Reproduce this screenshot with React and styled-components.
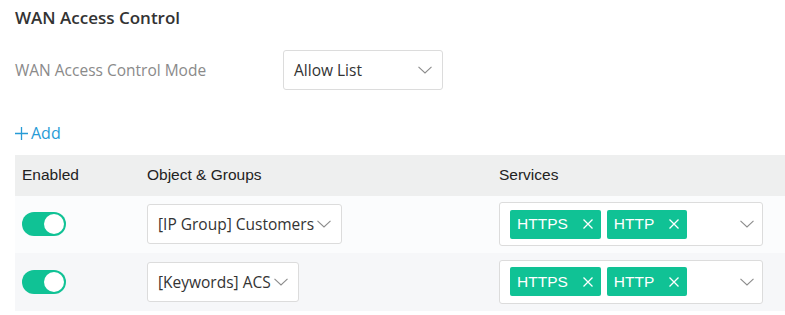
import React from "react";
import styled, { createGlobalStyle } from "styled-components";

const Global = createGlobalStyle`
  html, body { margin: 0; padding: 0; background: #fff; }
  body { font-family: "Open Sans", "Liberation Sans", sans-serif; }
`;

const Page = styled.div`
  padding: 6px 0 0 15px;
  width: 770px;
`;

const Title = styled.h2`
  margin: 0;
  font-size: 17px;
  line-height: 24px;
  font-weight: 600;
  color: #333;
`;

const ModeRow = styled.div`
  display: flex;
  align-items: center;
  margin-top: 20px;
`;

const Label = styled.div`
  width: 268px;
  font-size: 15.5px;
  color: #8a8a8a;
`;

const Select = styled.div`
  box-sizing: border-box;
  display: inline-flex;
  align-items: center;
  justify-content: space-between;
  gap: 3px;
  width: ${(p) => (p.$width ? `${p.$width}px` : "auto")};
  height: ${(p) => p.$height || 40}px;
  padding: 0 ${(p) => p.$pr ?? 10}px 0 10px;
  border: 1px solid #dcdcdc;
  border-radius: 3px;
  background: #fff;
  font-family: "Open Sans", sans-serif;
  font-size: 15.5px;
  color: #333;
  white-space: nowrap;
`;

const AddLink = styled.div`
  display: inline-flex;
  align-items: center;
  gap: 3px;
  margin-top: 32px;
  font-size: 16px;
  line-height: 22px;
  color: #279bd6;
`;

const Table = styled.div`
  margin-top: 10px;
  font-family: "Liberation Sans", Arial, sans-serif;
`;

const Row = styled.div`
  display: grid;
  grid-template-columns: 125px 352px 1fr;
  align-items: center;
  height: ${(p) => p.$h}px;
  background: ${(p) => p.$bg};
`;

const HeadCell = styled.div`
  padding-left: 7px;
  font-size: 15.5px;
  color: #222;
`;

const Cell = styled.div`
  padding-left: 7px;
  display: flex;
  align-items: center;
`;

const Toggle = styled.div`
  box-sizing: border-box;
  width: 44px;
  height: 24px;
  border-radius: 12px;
  background: #10c295;
  padding: 2px;
  display: flex;
  justify-content: flex-end;
  &::after {
    content: "";
    width: 20px;
    height: 20px;
    border-radius: 50%;
    background: #fff;
  }
`;

const Tags = styled.div`
  display: flex;
  gap: 6px;
`;

const Tag = styled.span`
  display: inline-flex;
  align-items: center;
  gap: 15px;
  height: 29px;
  padding: 0 8px 0 7px;
  border-radius: 2px;
  background: #10c295;
  color: #fff;
  font-family: "Liberation Sans", Arial, sans-serif;
  font-size: 15.5px;
`;

const Chevron = () => (
  <svg width="14" height="8" viewBox="0 0 14 8" fill="none">
    <path d="M0.5 0.8 L7 7 L13.5 0.8" stroke="#8c8c8c" strokeWidth="1.1" />
  </svg>
);

const Close = () => (
  <svg width="10" height="10" viewBox="0 0 10 10" fill="none">
    <path d="M0.5 0.5 L9.5 9.5 M9.5 0.5 L0.5 9.5" stroke="#fff" strokeWidth="1.3" />
  </svg>
);

const Plus = () => (
  <svg width="13" height="13" viewBox="0 0 13 13" fill="none">
    <path d="M6.5 0 V13 M0 6.5 H13" stroke="#279bd6" strokeWidth="1.3" />
  </svg>
);

const rows = [
  { obj: "[IP Group] Customers", bg: "#fbfcfd", h: 57 },
  { obj: "[Keywords] ACS", bg: "#f6f7f9", h: 58 },
];

export default function App() {
  return (
    <>
      <Global />
      <Page>
        <Title>WAN Access Control</Title>
        <ModeRow>
          <Label>WAN Access Control Mode</Label>
          <Select $width={160}>
            Allow List
            <Chevron />
          </Select>
        </ModeRow>
        <AddLink>
          <Plus />
          Add
        </AddLink>
        <Table>
          <Row $h={41} $bg="#eeefef">
            <HeadCell>Enabled</HeadCell>
            <HeadCell>Object &amp; Groups</HeadCell>
            <HeadCell>Services</HeadCell>
          </Row>
          {rows.map((r) => (
            <Row key={r.obj} $h={r.h} $bg={r.bg}>
              <Cell>
                <Toggle />
              </Cell>
              <Cell>
                <Select>
                  {r.obj}
                  <Chevron />
                </Select>
              </Cell>
              <Cell>
                <Select $width={264} $height={44} $pr={8}>
                  <Tags>
                    <Tag>
                      HTTPS
                      <Close />
                    </Tag>
                    <Tag>
                      HTTP
                      <Close />
                    </Tag>
                  </Tags>
                  <Chevron />
                </Select>
              </Cell>
            </Row>
          ))}
        </Table>
      </Page>
    </>
  );
}
